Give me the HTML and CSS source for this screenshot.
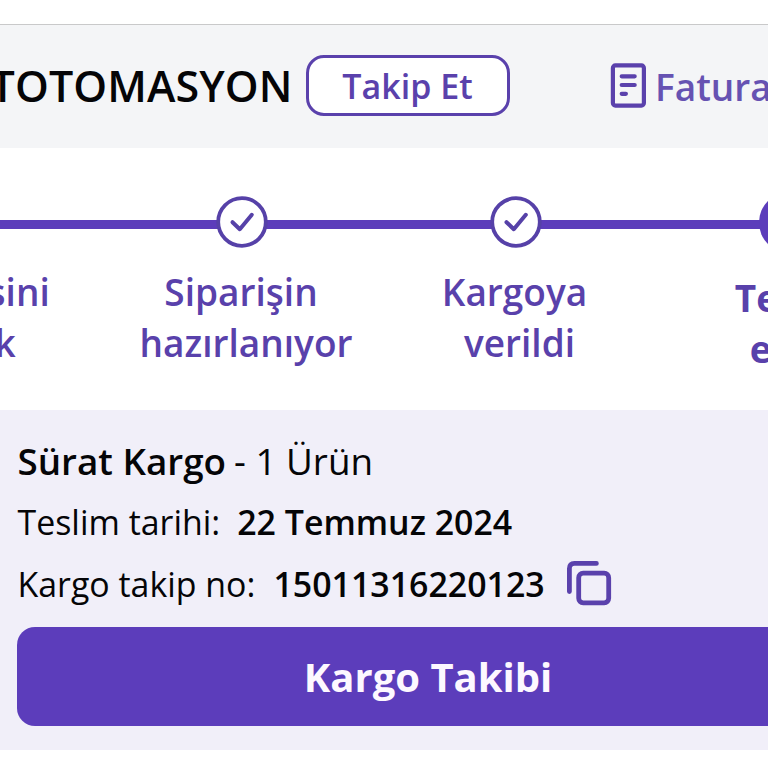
FILE: index.html
```
<!DOCTYPE html>
<html lang="tr">
<head>
<meta charset="utf-8">
<title>Sipariş Detayı</title>
<link rel="stylesheet" href="styles.css">
</head>
<body>
<header class="seller">
  <div class="seller-name"><span>TOTOMASYON</span></div>
  <button class="follow"><span>Takip Et</span></button>
  <a class="invoice">
    <svg class="invoice-icon" width="36" height="45" viewBox="0 0 36 45" fill="none" stroke="#5a41ac" stroke-width="4.2" stroke-linecap="round">
      <rect x="2.9" y="2.4" width="31" height="40.2" rx="2.5"/>
      <path d="M11.7 13.3H24.7M11.7 22H24.7M11.7 30.8H15.9"/>
    </svg>
    <span>Fatura</span>
  </a>
</header>
<section class="steps">
  <div class="step step-first">
    <div class="track"></div>
    <p class="label"><span>sini</span><span class="second">k</span></p>
  </div>
  <div class="step">
    <div class="track">
      <svg class="dot" width="52" height="52" viewBox="0 0 52 52"><circle cx="26" cy="26" r="23.8"/><path d="M16.5 26.2 23.8 33.2 35.8 18.8"/></svg>
    </div>
    <p class="label"><span>Siparişin</span><span class="second">hazırlanıyor</span></p>
  </div>
  <div class="step">
    <div class="track">
      <svg class="dot" width="52" height="52" viewBox="0 0 52 52"><circle cx="26" cy="26" r="23.8"/><path d="M16.5 26.2 23.8 33.2 35.8 18.8"/></svg>
    </div>
    <p class="label"><span>Kargoya</span><span class="second">verildi</span></p>
  </div>
  <div class="step step-current">
    <div class="track"><div class="dot-current"></div></div>
    <p class="label"><span>Teslim</span><span class="second">edildi</span></p>
  </div>
</section>
<section class="cargo">
  <p class="row carrier"><b>Sürat Kargo</b><span>- 1 Ürün</span></p>
  <p class="row date"><span>Teslim tarihi:</span><b>22 Temmuz 2024</b></p>
  <p class="row number"><span>Kargo takip no:</span><b>15011316220123</b>
    <svg class="copy" width="46" height="46" viewBox="0 0 46 46" fill="none" stroke="#5a41ac" stroke-width="4.8" stroke-linecap="round">
      <path d="M3.4 31.5V8.4Q3.4 3.4 8.4 3.4H30.4"/>
      <rect x="12.7" y="13.2" width="30" height="29.6" rx="4.5"/>
    </svg>
  </p>
  <button class="track-button"><span>Kargo Takibi</span></button>
</section>
</body>
</html>
```
FILE: styles.css
```
* { box-sizing: border-box; }
html { overflow: hidden; }
body {
  margin: 0;
  padding-top: 24px;
  width: 768px;
  height: 768px;
  overflow: hidden;
  background: #fff;
  color: #050507;
  font-family: "Open Sans", sans-serif;
}
p { margin: 0; }
button { font-family: inherit; border: 0; padding: 0; }

.seller {
  display: flex;
  height: 124px;
  border-top: 1px solid #c9c9ca;
  background: #f4f5f7;
  white-space: nowrap;
}
.seller-name {
  display: flex;
  justify-content: flex-end;
  width: 292.5px;
  flex: none;
  font-size: 43px;
  font-weight: 600;
  letter-spacing: 0.1px;
  line-height: 122px;
}
.follow {
  flex: none;
  width: 204px;
  height: 61px;
  margin: 30px 0 0 13.5px;
  border: 3px solid #5a41ac;
  border-radius: 18px;
  background: #fff;
  color: #5a41ac;
  font-size: 34px;
  font-weight: 600;
  line-height: 54px;
}
.follow span { margin-right: 1px; }
.invoice {
  display: flex;
  margin-left: 100px;
  color: #6652b2;
  font-size: 37px;
  font-weight: 600;
  line-height: 123px;
}
.invoice-icon { flex: none; margin: 38px 9px 0 0; }

.steps {
  display: grid;
  grid-template-columns: repeat(4, 273.5px);
  width: 1094px;
  height: 262px;
  margin-left: -168.25px;
  padding-top: 44px;
}
.track {
  display: flex;
  align-items: center;
  justify-content: center;
  height: 60px;
  background: linear-gradient(#5c3dbb, #5c3dbb) 0 28px / 100% 9px no-repeat;
}
.dot { fill: #fff; stroke: #5641a8; stroke-width: 3.8; }
.dot path { fill: none; stroke-width: 4; stroke-linecap: round; stroke-linejoin: round; }
.dot-current { width: 61px; height: 61px; flex: none; border-radius: 50%; background: #5c3dbb; }
.label {
  display: flex;
  flex-direction: column;
  align-items: center;
  margin-top: 14px;
  padding-right: 2px;
  color: #5941ab;
  font-size: 37px;
  font-weight: 600;
  line-height: 51px;
  white-space: nowrap;
}
.label .second { padding-left: 10px; }
.step-first .label { align-items: flex-end; padding-right: 55.5px; }
.step-first .second { padding-right: 34px; }
.step-current .label { align-items: flex-start; margin-top: 20px; padding-left: 82.5px; font-weight: 700; }
.step-current .second { padding-left: 15px; }

.cargo {
  height: 340px;
  padding-left: 17px;
  background: #f1eff9;
}
.row { display: flex; height: 61px; padding-left: 0.5px; line-height: 61px; font-size: 33.9px; white-space: nowrap; }
.row b { font-weight: 600; }
.carrier { height: 82px; line-height: 102px; font-size: 36.8px; }
.carrier span { margin-left: 8px; }
.date b { margin-left: 17px; }
.number { line-height: 63px; }
.number b { margin-left: 18px; }
.copy { margin: 7px 0 0 21.5px; }
.track-button {
  display: block;
  width: 822px;
  height: 99px;
  margin-top: 13px;
  border-radius: 18px;
  background: #5c3dbb;
  color: #fdf8ff;
  font-size: 40px;
  font-weight: 700;
  line-height: 98px;
}
```
